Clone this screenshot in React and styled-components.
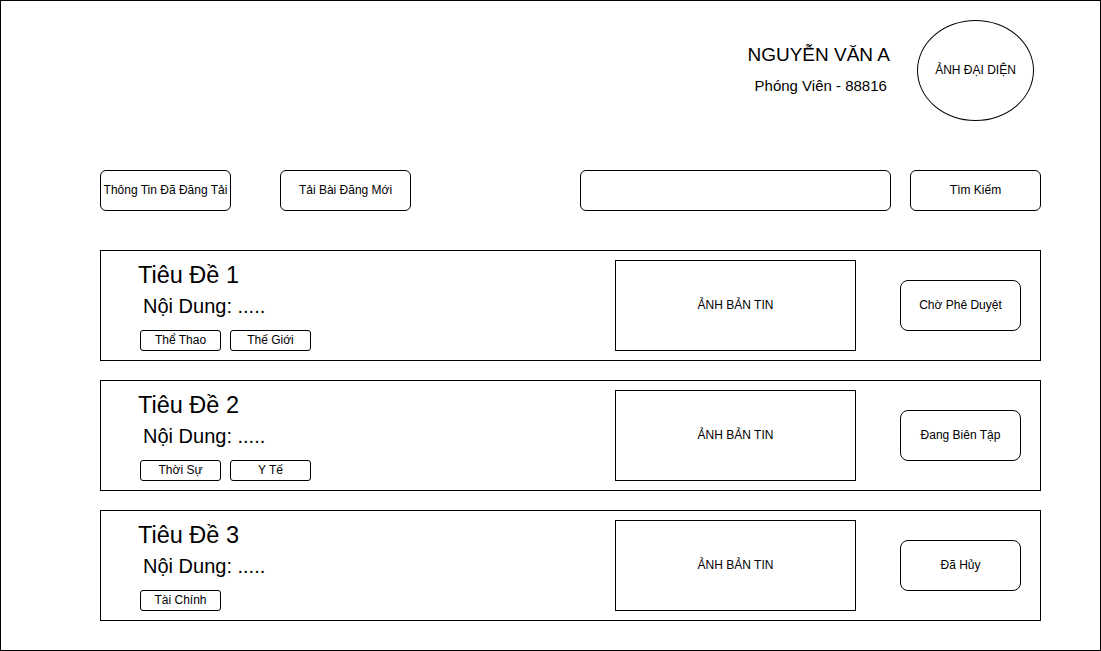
import React from "react";
import styled, { createGlobalStyle } from "styled-components";

const Global = createGlobalStyle`
  html, body { margin: 0; padding: 0; background: #fff; }
  body { font-family: "Liberation Sans", Arial, sans-serif; color: #000; }
  * { box-sizing: border-box; }
`;

const Frame = styled.div`
  width: 1101px;
  height: 651px;
  border: 1px solid #000;
  background: #fff;
  display: flex;
  flex-direction: column;
`;

const Header = styled.header`
  display: flex;
  justify-content: flex-end;
  align-items: center;
  gap: 27px;
  margin-top: 19px;
  padding-right: 66px;
`;

const Identity = styled.div`
  display: flex;
  flex-direction: column;
  align-items: center;
  gap: 10px;
  padding-bottom: 1px;
`;

const Name = styled.div`
  font-size: 19px;
  line-height: 22px;
`;

const Role = styled.div`
  font-size: 15px;
  line-height: 20px;
  padding-left: 4px;
`;

const Avatar = styled.div`
  width: 117px;
  height: 101px;
  border: 1px solid #000;
  border-radius: 50%;
  display: flex;
  align-items: center;
  justify-content: center;
  font-size: 12px;
  padding-bottom: 2px;
`;

const Toolbar = styled.nav`
  display: flex;
  align-items: center;
  margin-top: 49px;
  padding: 0 59px 0 99px;
`;

const Button = styled.button`
  width: 131px;
  height: 41px;
  border: 1px solid #000;
  border-radius: 6px;
  background: #fff;
  font-family: "Liberation Sans", Arial, sans-serif;
  font-size: 12px;
  color: #000;
  padding: 0 0 2px;
  margin-left: ${(p) => p.$offset || 0}px;
  white-space: nowrap;
`;

const SearchInput = styled.input`
  width: 311px;
  height: 41px;
  border: 1px solid #000;
  border-radius: 6px;
  margin-left: auto;
  margin-right: 19px;
  padding: 0 8px;
  font-family: "Liberation Sans", Arial, sans-serif;
  font-size: 12px;
  outline: none;
`;

const List = styled.section`
  display: flex;
  flex-direction: column;
  gap: 19px;
  margin: 39px 0 0 99px;
  width: 941px;
`;

const Card = styled.article`
  height: 111px;
  border: 1px solid #000;
  display: flex;
  align-items: center;
  padding-right: 19px;
`;

const Body = styled.div`
  width: 514px;
  align-self: stretch;
  display: flex;
  flex-direction: column;
  padding: 11px 0 0 39px;
`;

const Title = styled.h2`
  margin: 0 0 0 -2px;
  font-weight: normal;
  font-size: 23.5px;
  line-height: 26px;
`;

const Content = styled.p`
  margin: 7px 0 0 3px;
  font-size: 20px;
  line-height: 23px;
`;

const Tags = styled.div`
  display: flex;
  gap: 9px;
  margin-top: 12px;
`;

const Tag = styled.span`
  width: 81px;
  height: 21px;
  border: 1px solid #000;
  border-radius: 3px;
  display: flex;
  align-items: center;
  justify-content: center;
  font-size: 12px;
  padding-bottom: 2px;
`;

const Thumb = styled.div`
  width: 241px;
  height: 91px;
  border: 1px solid #000;
  display: flex;
  align-items: center;
  justify-content: center;
  font-size: 12px;
  padding-bottom: 2px;
`;

const Status = styled.div`
  width: 121px;
  height: 51px;
  border: 1px solid #000;
  border-radius: 8px;
  margin-left: auto;
  display: flex;
  align-items: center;
  justify-content: center;
  font-size: 12px;
  padding-bottom: 2px;
`;

const posts = [
  { title: "Tiêu Đề 1", tags: ["Thể Thao", "Thế Giới"], status: "Chờ Phê Duyệt" },
  { title: "Tiêu Đề 2", tags: ["Thời Sự", "Y Tế"], status: "Đang Biên Tập" },
  { title: "Tiêu Đề 3", tags: ["Tài Chính"], status: "Đã Hủy" },
];

export default function App() {
  return (
    <>
      <Global />
      <Frame>
        <Header>
          <Identity>
            <Name>NGUYỄN VĂN A</Name>
            <Role>Phóng Viên - 88816</Role>
          </Identity>
          <Avatar>ẢNH ĐẠI DIỆN</Avatar>
        </Header>
        <Toolbar>
          <Button>Thông Tin Đã Đăng Tải</Button>
          <Button $offset={49}>Tải Bài Đăng Mới</Button>
          <SearchInput />
          <Button>Tìm Kiếm</Button>
        </Toolbar>
        <List>
          {posts.map((p) => (
            <Card key={p.title}>
              <Body>
                <Title>{p.title}</Title>
                <Content>Nội Dung: .....</Content>
                <Tags>
                  {p.tags.map((t) => (
                    <Tag key={t}>{t}</Tag>
                  ))}
                </Tags>
              </Body>
              <Thumb>ẢNH BẢN TIN</Thumb>
              <Status>{p.status}</Status>
            </Card>
          ))}
        </List>
      </Frame>
    </>
  );
}
